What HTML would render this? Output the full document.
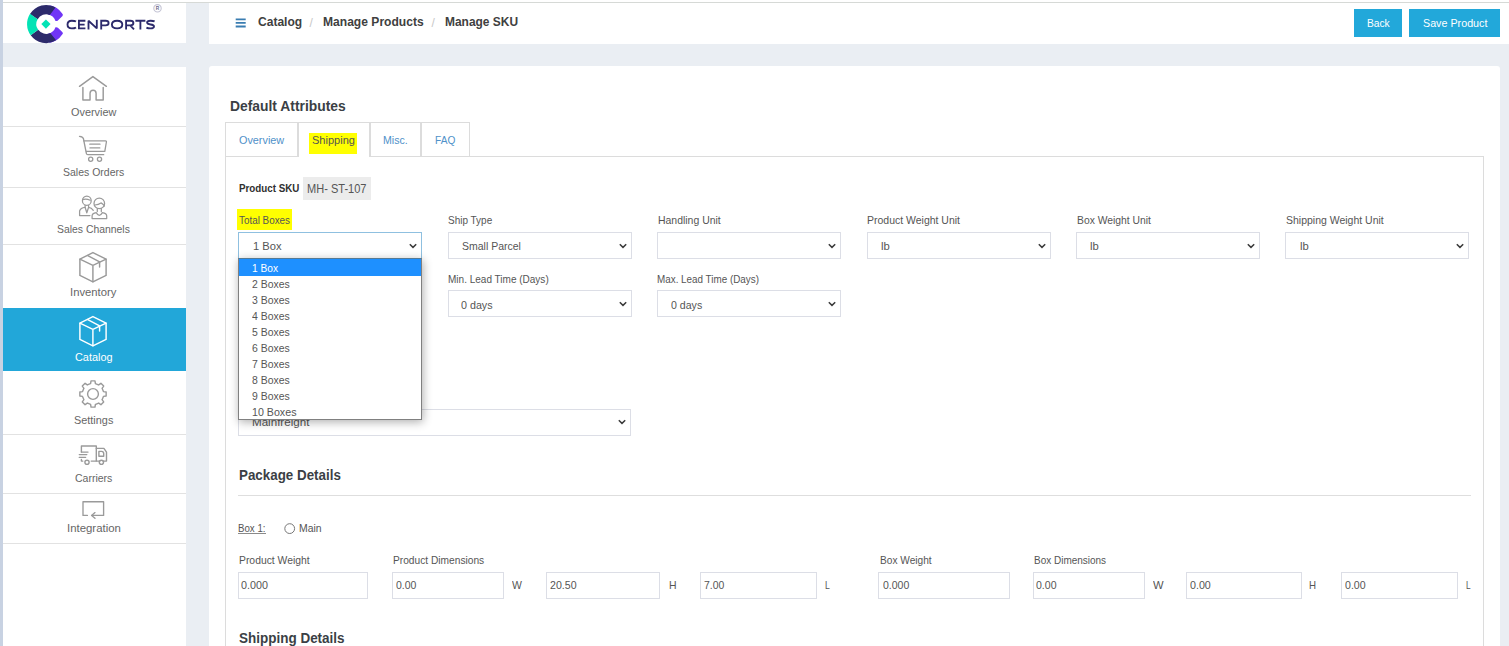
<!DOCTYPE html>
<html><head><meta charset="utf-8"><style>
html,body{margin:0;padding:0;}
body{width:1509px;height:646px;overflow:hidden;position:relative;background:#eaeef3;font-family:"Liberation Sans", sans-serif;}
</style></head><body>
<div style="position:absolute;left:0.00px;top:0.00px;width:3.00px;height:646.00px;background:#c8d2e2"></div>
<div style="position:absolute;left:3.00px;top:0.00px;width:1506.00px;height:2.00px;background:#fff"></div>
<div style="position:absolute;left:3.00px;top:2.00px;width:1506.00px;height:1.00px;background:#d6d9d6"></div>
<div style="position:absolute;left:3.00px;top:3.00px;width:182.50px;height:40.00px;background:#fff"></div>
<div style="position:absolute;left:209.00px;top:3.00px;width:1300.00px;height:41.00px;background:#fff"></div>
<div style="position:absolute;left:3.00px;top:67.00px;width:182.50px;height:580.00px;background:#fff"></div>
<div style="position:absolute;left:209.00px;top:66.00px;width:1291.00px;height:600.00px;background:#fff;border-radius:3px"></div>
<svg style="position:absolute;left:0;top:0" width="170" height="44" viewBox="0 0 170 44">
<path d="M49.45 5.32 A19.07 19.07 0 0 1 62.2 13.6 Q63.5 14.9 62.5 16.0 L57.9 20.4 Q57.0 21.2 55.5 20.9 A9.8 9.8 0 0 0 47.84 14.45 Z" fill="#7035f6"/><path d="M49.45 42.88 A19.07 19.07 0 0 0 62.2 34.6 Q63.5 33.3 62.5 32.2 L57.9 27.8 Q57.0 27.0 55.5 27.3 A9.8 9.8 0 0 1 47.84 33.75 Z" fill="#7035f6"/>
<path d="M29.97 13.99 A19.07 19.07 0 0 1 55.53 7.50 L49.81 15.01 A9.8 9.8 0 0 0 37.65 19.20 Z" fill="#2c2a6b"/><path d="M30.71 35.31 A19.07 19.07 0 0 0 56.10 40.36 L50.28 32.98 A9.8 9.8 0 0 1 38.21 29.86 Z" fill="#2c2a6b"/>
<path d="M30.06 13.85 A19.07 19.07 0 0 0 30.71 35.31 L38.21 29.86 A9.8 9.8 0 0 1 37.65 19.20 Z" fill="#02e3b5"/><path d="M45.94 19.50 L50.54 24.10 L45.94 28.70 L41.34 24.10 Z" fill="#02e3b5"/>
<path d="M76.0 21.6 C75.0 20.9 73.6 20.7 71.8 20.7 C69.0 20.7 67.5 22.3 67.5 24.549999999999997 C67.5 26.8 69.0 28.4 71.8 28.4 C73.6 28.4 75.0 28.1 76.0 27.4 M85.4 20.7 H78.9 V28.4 H85.4 M78.9 24.549999999999997 H84.6 M88.5 29.4 V20.7 L96.8 28.4 V19.7 M101.2 29.4 V20.7 H105.6 C107.6 20.7 108.6 21.8 108.6 23.0 C108.6 24.3 107.6 25.3 105.6 25.3 H101.2 M117.1 20.7 C120.6 20.7 122.3 22.3 122.3 24.549999999999997 C122.3 26.8 120.6 28.4 117.1 28.4 C113.6 28.4 111.9 26.8 111.9 24.549999999999997 C111.9 22.3 113.6 20.7 117.1 20.7 Z M126.1 29.4 V20.7 H130.4 C132.4 20.7 133.4 21.8 133.4 23.0 C133.4 24.3 132.4 25.3 130.4 25.3 H126.1 M130.2 25.3 L134.0 29.4 M135.4 20.7 H145.4 M140.4 20.7 V29.4 M154.6 21.4 C153.6 20.9 152.4 20.7 150.6 20.7 C148.2 20.7 147.1 21.5 147.1 22.6 C147.1 24.0 148.4 24.3 150.6 24.5 C153.0 24.7 154.0 25.1 154.0 26.5 C154.0 27.6 152.9 28.4 150.4 28.4 C148.8 28.4 147.2 28.0 146.4 27.6" fill="none" stroke="#2c2a6b" stroke-width="1.85" stroke-miterlimit="1.5"/>
<circle cx="157.5" cy="8.3" r="3.7" fill="#fff" stroke="#c4c4d4" stroke-width="1.1"/>
<text x="157.6" y="10.1" font-size="4.8" font-weight="700" text-anchor="middle" fill="#6a6a8a" font-family="Liberation Sans">R</text>
</svg>
<svg style="position:absolute;left:230px;top:14px" width="20" height="18"><path d="M5.7 5.3 H15.7 M5.7 8.9 H15.7 M5.7 12.5 H15.7" stroke="#3a7db1" stroke-width="1.8"/></svg>
<div style="position:absolute;left:257.60px;top:15.96px;font-size:12.8px;line-height:12.8px;font-weight:700;color:#404040;white-space:nowrap;transform:scaleX(0.9403);transform-origin:0 0;">Catalog</div>
<div style="position:absolute;left:309.50px;top:16.64px;font-size:12px;line-height:12px;font-weight:400;color:#c8c8c8;white-space:nowrap;">/</div>
<div style="position:absolute;left:323.00px;top:15.96px;font-size:12.8px;line-height:12.8px;font-weight:700;color:#404040;white-space:nowrap;transform:scaleX(0.9438);transform-origin:0 0;">Manage Products</div>
<div style="position:absolute;left:431.50px;top:16.64px;font-size:12px;line-height:12px;font-weight:400;color:#c8c8c8;white-space:nowrap;">/</div>
<div style="position:absolute;left:445.00px;top:15.96px;font-size:12.8px;line-height:12.8px;font-weight:700;color:#404040;white-space:nowrap;transform:scaleX(0.9335);transform-origin:0 0;">Manage SKU</div>
<div style="position:absolute;left:1354.00px;top:9.20px;width:48.00px;height:27.60px;background:#22a8da"></div>
<div style="position:absolute;left:1367.20px;top:17.71px;font-size:11.8px;line-height:11.8px;font-weight:400;color:#fff;white-space:nowrap;transform:scaleX(0.8669);transform-origin:0 0;">Back</div>
<div style="position:absolute;left:1409.30px;top:9.20px;width:90.70px;height:27.60px;background:#22a8da"></div>
<div style="position:absolute;left:1422.60px;top:17.71px;font-size:11.8px;line-height:11.8px;font-weight:400;color:#fff;white-space:nowrap;transform:scaleX(0.9096);transform-origin:0 0;">Save Product</div>
<div style="position:absolute;left:3.00px;top:126.00px;width:183.00px;height:1.00px;background:#e2e2e2"></div>
<div style="position:absolute;left:3.00px;top:186.50px;width:183.00px;height:1.00px;background:#e2e2e2"></div>
<div style="position:absolute;left:3.00px;top:243.50px;width:183.00px;height:1.00px;background:#e2e2e2"></div>
<div style="position:absolute;left:3.00px;top:434.00px;width:183.00px;height:1.00px;background:#e2e2e2"></div>
<div style="position:absolute;left:3.00px;top:492.50px;width:183.00px;height:1.00px;background:#e2e2e2"></div>
<div style="position:absolute;left:3.00px;top:543.00px;width:183.00px;height:1.00px;background:#e2e2e2"></div>
<div style="position:absolute;left:3.00px;top:307.50px;width:183.00px;height:63.50px;background:#22a7d9"></div>
<div style="position:absolute;left:70.80px;top:106.73px;font-size:11.3px;line-height:11.3px;font-weight:400;color:#666;white-space:nowrap;transform:scaleX(0.9639);transform-origin:0 0;">Overview</div>
<div style="position:absolute;left:62.90px;top:166.73px;font-size:11.3px;line-height:11.3px;font-weight:400;color:#666;white-space:nowrap;transform:scaleX(0.9287);transform-origin:0 0;">Sales Orders</div>
<div style="position:absolute;left:57.05px;top:223.73px;font-size:11.3px;line-height:11.3px;font-weight:400;color:#666;white-space:nowrap;transform:scaleX(0.9205);transform-origin:0 0;">Sales Channels</div>
<div style="position:absolute;left:70.30px;top:287.43px;font-size:11.3px;line-height:11.3px;font-weight:400;color:#666;white-space:nowrap;transform:scaleX(0.9978);transform-origin:0 0;">Inventory</div>
<div style="position:absolute;left:74.75px;top:352.23px;font-size:11.3px;line-height:11.3px;font-weight:400;color:#fff;white-space:nowrap;transform:scaleX(0.9640);transform-origin:0 0;">Catalog</div>
<div style="position:absolute;left:73.85px;top:415.03px;font-size:11.3px;line-height:11.3px;font-weight:400;color:#666;white-space:nowrap;transform:scaleX(0.9632);transform-origin:0 0;">Settings</div>
<div style="position:absolute;left:74.80px;top:473.43px;font-size:11.3px;line-height:11.3px;font-weight:400;color:#666;white-space:nowrap;transform:scaleX(0.9303);transform-origin:0 0;">Carriers</div>
<div style="position:absolute;left:66.55px;top:523.23px;font-size:11.3px;line-height:11.3px;font-weight:400;color:#666;white-space:nowrap;transform:scaleX(1.0094);transform-origin:0 0;">Integration</div>
<svg style="position:absolute;left:76px;top:73px" width="34" height="30" viewBox="0 0 34 30" fill="none" stroke="#9a9a9a" stroke-width="1.45" stroke-linejoin="round" stroke-linecap="round"><path d="M3.5 13.3 L16.9 3.6 L30.4 13.3"/><path d="M6.9 14.4 V27 H14.05 V20.2 A3.03 3.03 0 0 1 20.1 20.2 V27 H27.2 V14.4"/></svg>
<svg style="position:absolute;left:76px;top:132px" width="34" height="32" viewBox="0 0 34 32" fill="none" stroke="#9a9a9a" stroke-width="1.3" stroke-linejoin="round" stroke-linecap="round"><path d="M3.5 4.3 C5.5 4.5 7.3 5.5 7.5 7 L10.4 21.5 Q10.6 22.7 11.8 22.7 H27.7"/><path d="M7.7 8.8 H29.4 Q30.6 8.9 30.4 10 L28.8 19.3 H10.4"/><path d="M13.8 12.2 H24 M14 15.9 H23.8"/><circle cx="14.7" cy="27.2" r="2.1"/><circle cx="23.5" cy="27.2" r="2.1"/></svg>
<svg style="position:absolute;left:76px;top:193px" width="34" height="28" viewBox="0 0 34 28" fill="none" stroke="#9a9a9a" stroke-width="1.25" stroke-linejoin="round" stroke-linecap="round"><ellipse cx="10.8" cy="7.65" rx="4.4" ry="4.6"/><path d="M6.6 6.6 Q10 5.2 14.2 7.2"/><path d="M9.1 12.3 V14.3 Q4.5 14.8 3.6 18.0 V22.5 H13.9"/><path d="M9.1 14.3 L10.8 19.8 L12.6 14.3 V12.3 M12.6 14.3 Q15.5 14.6 17.3 17.3"/><circle cx="23.3" cy="10.4" r="5.3"/><path d="M19.0 12.0 Q22.5 11.6 25 9.9 Q27.2 11 28.4 13"/><path d="M21.3 15.6 V18.6 M25.3 15.6 V18.6"/><path d="M16.1 25.5 V22.8 Q16.1 20.3 20.2 19.6 Q23.3 25 26.4 19.6 Q30.7 20.3 30.7 22.8 V25.5 Z"/></svg>
<svg style="position:absolute;left:76px;top:250px" width="34" height="34" viewBox="0 0 34 34" fill="none" stroke="#9a9a9a" stroke-width="1.45" stroke-linejoin="round" stroke-linecap="round"><path d="M16.9 2.6 L30.1 9.2 V25.4 L16.9 31.8 L3.9 25.4 V9.2 Z"/><path d="M3.9 9.2 L16.9 15.4 L30.1 9.2 M16.9 15.4 V31.8"/><path d="M11.8 5.6 L23.6 11.8 V17.1"/></svg>
<svg style="position:absolute;left:76px;top:313.8px" width="34" height="34" viewBox="0 0 34 34" fill="none" stroke="#fff" stroke-width="1.45" stroke-linejoin="round" stroke-linecap="round"><path d="M16.9 2.6 L30.1 9.2 V25.4 L16.9 31.8 L3.9 25.4 V9.2 Z"/><path d="M3.9 9.2 L16.9 15.4 L30.1 9.2 M16.9 15.4 V31.8"/><path d="M11.8 5.6 L23.6 11.8 V17.1"/></svg>
<svg style="position:absolute;left:76px;top:377px" width="34" height="34" viewBox="0 0 34 34" fill="none" stroke="#9a9a9a" stroke-width="1.4" stroke-linejoin="round" stroke-linecap="round"><path d="M14.32 6.64 L14.59 6.57 L15.03 3.85 L18.97 3.85 L19.41 6.57 L22.43 7.78 L22.67 7.93 L24.91 6.31 L27.69 9.09 L26.07 11.33 L27.36 14.32 L27.43 14.59 L30.15 15.03 L30.15 18.97 L27.43 19.41 L26.22 22.43 L26.07 22.67 L27.69 24.91 L24.91 27.69 L22.67 26.07 L19.68 27.36 L19.41 27.43 L18.97 30.15 L15.03 30.15 L14.59 27.43 L11.57 26.22 L11.33 26.07 L9.09 27.69 L6.31 24.91 L7.93 22.67 L6.64 19.68 L6.57 19.41 L3.85 18.97 L3.85 15.03 L6.57 14.59 L7.78 11.57 L7.93 11.33 L6.31 9.09 L9.09 6.31 L11.33 7.93 Z"/><circle cx="17" cy="17" r="5.4"/></svg>
<svg style="position:absolute;left:76px;top:442px" width="34" height="26" viewBox="0 0 34 26" fill="none" stroke="#9a9a9a" stroke-width="1.4" stroke-linejoin="round" stroke-linecap="round"><path d="M5.4 10.1 V4 H20.3 V19.1"/><path d="M5.4 10.1 H12"/><path d="M3.3 12.6 H10.8 M3.3 15.4 H9.6"/><path d="M5.4 17.5 V19.1 H6.8"/><path d="M15.2 19.1 H23.8 M27.1 19.1 H30.5 V10.1 L27.9 6.4 H20.3"/><path d="M22.9 9.4 H25.6 Q27.7 9.4 27.7 11.6 V14.3 H22.9 Z"/><circle cx="11" cy="20.3" r="2.1"/><circle cx="25.4" cy="20.3" r="2.1"/></svg>
<svg style="position:absolute;left:76px;top:494px" width="34" height="28" viewBox="0 0 34 28" fill="none" stroke="#9a9a9a" stroke-width="1.35" stroke-linejoin="round" stroke-linecap="round"><path d="M11.4 21.4 H7 V7.7 H27.6 V21.4 H15.6"/><path d="M19 18.6 L15.6 21.4 L19 24.2"/></svg>
<div style="position:absolute;left:230.00px;top:98.30px;font-size:15px;line-height:15px;font-weight:700;color:#3b3f45;white-space:nowrap;transform:scaleX(0.9242);transform-origin:0 0;">Default Attributes</div>
<div style="position:absolute;left:225.00px;top:122.00px;width:73.00px;height:35.00px;box-sizing:border-box;border:1px solid #dcdcdc;border-bottom:none"></div>
<div style="position:absolute;left:298.00px;top:122.00px;width:72.00px;height:35.00px;box-sizing:border-box;border:1px solid #dcdcdc;border-bottom:none"></div>
<div style="position:absolute;left:370.00px;top:122.00px;width:51.00px;height:35.00px;box-sizing:border-box;border:1px solid #dcdcdc;border-bottom:none"></div>
<div style="position:absolute;left:421.00px;top:122.00px;width:49.00px;height:35.00px;box-sizing:border-box;border:1px solid #dcdcdc;border-bottom:none"></div>
<div style="position:absolute;left:225.00px;top:156.00px;width:73.00px;height:1.00px;background:#dcdcdc"></div>
<div style="position:absolute;left:370.00px;top:156.00px;width:1114.00px;height:1.00px;background:#dcdcdc"></div>
<div style="position:absolute;left:225.00px;top:156.00px;width:1.00px;height:500.00px;background:#dcdcdc"></div>
<div style="position:absolute;left:1483.00px;top:156.00px;width:1.00px;height:500.00px;background:#dcdcdc"></div>
<div style="position:absolute;left:239.40px;top:134.77px;font-size:11.5px;line-height:11.5px;font-weight:400;color:#4f91c9;white-space:nowrap;transform:scaleX(0.9417);transform-origin:0 0;">Overview</div>
<div style="position:absolute;left:309.00px;top:132.50px;width:48.00px;height:21.30px;background:#ffff00"></div>
<div style="position:absolute;left:312.00px;top:134.77px;font-size:11.5px;line-height:11.5px;font-weight:400;color:#555;white-space:nowrap;transform:scaleX(0.9598);transform-origin:0 0;">Shipping</div>
<div style="position:absolute;left:383.30px;top:134.77px;font-size:11.5px;line-height:11.5px;font-weight:400;color:#4f91c9;white-space:nowrap;transform:scaleX(0.9216);transform-origin:0 0;">Misc.</div>
<div style="position:absolute;left:435.40px;top:134.77px;font-size:11.5px;line-height:11.5px;font-weight:400;color:#4f91c9;white-space:nowrap;transform:scaleX(0.8826);transform-origin:0 0;">FAQ</div>
<div style="position:absolute;left:238.60px;top:183.39px;font-size:11px;line-height:11px;font-weight:700;color:#2f2f2f;white-space:nowrap;transform:scaleX(0.8909);transform-origin:0 0;">Product SKU</div>
<div style="position:absolute;left:303.00px;top:176.50px;width:68.00px;height:23.00px;background:#ececec"></div>
<div style="position:absolute;left:307.00px;top:182.74px;font-size:12px;line-height:12px;font-weight:400;color:#555;white-space:nowrap;transform:scaleX(0.9196);transform-origin:0 0;">MH- ST-107</div>
<div style="position:absolute;left:237.00px;top:209.20px;width:55.00px;height:20.60px;background:#ffff00"></div>
<div style="position:absolute;left:239.00px;top:214.61px;font-size:10.5px;line-height:10.5px;font-weight:400;color:#555;white-space:nowrap;transform:scaleX(0.9392);transform-origin:0 0;">Total Boxes</div>
<div style="position:absolute;left:238.00px;top:232.00px;width:183.50px;height:27.00px;box-sizing:border-box;border:1px solid #8fc0e0;background:#fff"></div>
<svg style="position:absolute;left:408.00px;top:241.90px" width="10" height="8" viewBox="0 0 10 8"><path d="M1.8 2.2 L5 5.4 L8.2 2.2" fill="none" stroke="#3a3a3a" stroke-width="1.5"/></svg>
<div style="position:absolute;left:447.70px;top:214.61px;font-size:10.5px;line-height:10.5px;font-weight:400;color:#555;white-space:nowrap;transform:scaleX(0.9505);transform-origin:0 0;">Ship Type</div>
<div style="position:absolute;left:448.00px;top:232.00px;width:183.50px;height:27.00px;box-sizing:border-box;border:1px solid #dcdee6;background:#fff"></div>
<svg style="position:absolute;left:618.00px;top:241.90px" width="10" height="8" viewBox="0 0 10 8"><path d="M1.8 2.2 L5 5.4 L8.2 2.2" fill="none" stroke="#3a3a3a" stroke-width="1.5"/></svg>
<div style="position:absolute;left:657.70px;top:214.61px;font-size:10.5px;line-height:10.5px;font-weight:400;color:#555;white-space:nowrap;transform:scaleX(0.9952);transform-origin:0 0;">Handling Unit</div>
<div style="position:absolute;left:657.00px;top:232.00px;width:183.50px;height:27.00px;box-sizing:border-box;border:1px solid #dcdee6;background:#fff"></div>
<svg style="position:absolute;left:827.00px;top:241.90px" width="10" height="8" viewBox="0 0 10 8"><path d="M1.8 2.2 L5 5.4 L8.2 2.2" fill="none" stroke="#3a3a3a" stroke-width="1.5"/></svg>
<div style="position:absolute;left:867.10px;top:214.61px;font-size:10.5px;line-height:10.5px;font-weight:400;color:#555;white-space:nowrap;transform:scaleX(0.9979);transform-origin:0 0;">Product Weight Unit</div>
<div style="position:absolute;left:867.00px;top:232.00px;width:183.50px;height:27.00px;box-sizing:border-box;border:1px solid #dcdee6;background:#fff"></div>
<svg style="position:absolute;left:1037.00px;top:241.90px" width="10" height="8" viewBox="0 0 10 8"><path d="M1.8 2.2 L5 5.4 L8.2 2.2" fill="none" stroke="#3a3a3a" stroke-width="1.5"/></svg>
<div style="position:absolute;left:1076.60px;top:214.61px;font-size:10.5px;line-height:10.5px;font-weight:400;color:#555;white-space:nowrap;transform:scaleX(0.9840);transform-origin:0 0;">Box Weight Unit</div>
<div style="position:absolute;left:1076.00px;top:232.00px;width:183.50px;height:27.00px;box-sizing:border-box;border:1px solid #dcdee6;background:#fff"></div>
<svg style="position:absolute;left:1246.00px;top:241.90px" width="10" height="8" viewBox="0 0 10 8"><path d="M1.8 2.2 L5 5.4 L8.2 2.2" fill="none" stroke="#3a3a3a" stroke-width="1.5"/></svg>
<div style="position:absolute;left:1286.00px;top:214.61px;font-size:10.5px;line-height:10.5px;font-weight:400;color:#555;white-space:nowrap;transform:scaleX(0.9990);transform-origin:0 0;">Shipping Weight Unit</div>
<div style="position:absolute;left:1285.00px;top:232.00px;width:183.50px;height:27.00px;box-sizing:border-box;border:1px solid #dcdee6;background:#fff"></div>
<svg style="position:absolute;left:1455.00px;top:241.90px" width="10" height="8" viewBox="0 0 10 8"><path d="M1.8 2.2 L5 5.4 L8.2 2.2" fill="none" stroke="#3a3a3a" stroke-width="1.5"/></svg>
<div style="position:absolute;left:252.90px;top:241.37px;font-size:11.5px;line-height:11.5px;font-weight:400;color:#555;white-space:nowrap;transform:scaleX(0.9694);transform-origin:0 0;">1 Box</div>
<div style="position:absolute;left:461.60px;top:241.37px;font-size:11.5px;line-height:11.5px;font-weight:400;color:#555;white-space:nowrap;transform:scaleX(0.9132);transform-origin:0 0;">Small Parcel</div>
<div style="position:absolute;left:880.70px;top:241.37px;font-size:11.5px;line-height:11.5px;font-weight:400;color:#555;white-space:nowrap;transform:scaleX(0.9778);transform-origin:0 0;">lb</div>
<div style="position:absolute;left:1090.10px;top:241.37px;font-size:11.5px;line-height:11.5px;font-weight:400;color:#555;white-space:nowrap;transform:scaleX(0.9778);transform-origin:0 0;">lb</div>
<div style="position:absolute;left:1299.60px;top:241.37px;font-size:11.5px;line-height:11.5px;font-weight:400;color:#555;white-space:nowrap;transform:scaleX(0.9778);transform-origin:0 0;">lb</div>
<div style="position:absolute;left:447.70px;top:273.81px;font-size:10.5px;line-height:10.5px;font-weight:400;color:#555;white-space:nowrap;transform:scaleX(0.9536);transform-origin:0 0;">Min. Lead Time (Days)</div>
<div style="position:absolute;left:657.40px;top:273.81px;font-size:10.5px;line-height:10.5px;font-weight:400;color:#555;white-space:nowrap;transform:scaleX(0.9392);transform-origin:0 0;">Max. Lead Time (Days)</div>
<div style="position:absolute;left:448.00px;top:290.00px;width:183.50px;height:27.00px;box-sizing:border-box;border:1px solid #dcdee6;background:#fff"></div>
<svg style="position:absolute;left:618.00px;top:299.90px" width="10" height="8" viewBox="0 0 10 8"><path d="M1.8 2.2 L5 5.4 L8.2 2.2" fill="none" stroke="#3a3a3a" stroke-width="1.5"/></svg>
<div style="position:absolute;left:657.00px;top:290.00px;width:183.50px;height:27.00px;box-sizing:border-box;border:1px solid #dcdee6;background:#fff"></div>
<svg style="position:absolute;left:827.00px;top:299.90px" width="10" height="8" viewBox="0 0 10 8"><path d="M1.8 2.2 L5 5.4 L8.2 2.2" fill="none" stroke="#3a3a3a" stroke-width="1.5"/></svg>
<div style="position:absolute;left:461.20px;top:299.67px;font-size:11.5px;line-height:11.5px;font-weight:400;color:#555;white-space:nowrap;transform:scaleX(0.9322);transform-origin:0 0;">0 days</div>
<div style="position:absolute;left:670.80px;top:299.67px;font-size:11.5px;line-height:11.5px;font-weight:400;color:#555;white-space:nowrap;transform:scaleX(0.9204);transform-origin:0 0;">0 days</div>
<div style="position:absolute;left:238.40px;top:408.50px;width:392.30px;height:27.00px;box-sizing:border-box;border:1px solid #dcdee6;background:#fff"></div>
<svg style="position:absolute;left:617.20px;top:418.40px" width="10" height="8" viewBox="0 0 10 8"><path d="M1.8 2.2 L5 5.4 L8.2 2.2" fill="none" stroke="#3a3a3a" stroke-width="1.5"/></svg>
<div style="position:absolute;left:251.90px;top:416.97px;font-size:11.5px;line-height:11.5px;font-weight:400;color:#555;white-space:nowrap;transform:scaleX(1.0088);transform-origin:0 0;">Mainfreight</div>
<div style="position:absolute;left:238px;top:258px;width:184px;height:162px;box-sizing:border-box;border:1px solid #808080;border-top-color:#557a94;background:#fff;box-shadow:1px 2px 9px rgba(0,0,0,0.32)">
<div style="position:absolute;left:0;top:0;width:182px;height:16.5px;background:#1e90ff"></div>
</div>
<div style="position:absolute;left:251.90px;top:263.49px;font-size:11px;line-height:11px;font-weight:400;color:#fff;white-space:nowrap;transform:scaleX(0.9253);transform-origin:0 0;">1 Box</div>
<div style="position:absolute;left:251.90px;top:279.49px;font-size:11px;line-height:11px;font-weight:400;color:#555;white-space:nowrap;transform:scaleX(0.9496);transform-origin:0 0;">2 Boxes</div>
<div style="position:absolute;left:251.90px;top:295.49px;font-size:11px;line-height:11px;font-weight:400;color:#555;white-space:nowrap;transform:scaleX(0.9496);transform-origin:0 0;">3 Boxes</div>
<div style="position:absolute;left:251.90px;top:311.49px;font-size:11px;line-height:11px;font-weight:400;color:#555;white-space:nowrap;transform:scaleX(0.9496);transform-origin:0 0;">4 Boxes</div>
<div style="position:absolute;left:251.90px;top:327.49px;font-size:11px;line-height:11px;font-weight:400;color:#555;white-space:nowrap;transform:scaleX(0.9496);transform-origin:0 0;">5 Boxes</div>
<div style="position:absolute;left:251.90px;top:343.49px;font-size:11px;line-height:11px;font-weight:400;color:#555;white-space:nowrap;transform:scaleX(0.9496);transform-origin:0 0;">6 Boxes</div>
<div style="position:absolute;left:251.90px;top:359.49px;font-size:11px;line-height:11px;font-weight:400;color:#555;white-space:nowrap;transform:scaleX(0.9496);transform-origin:0 0;">7 Boxes</div>
<div style="position:absolute;left:251.90px;top:375.49px;font-size:11px;line-height:11px;font-weight:400;color:#555;white-space:nowrap;transform:scaleX(0.9496);transform-origin:0 0;">8 Boxes</div>
<div style="position:absolute;left:251.90px;top:391.49px;font-size:11px;line-height:11px;font-weight:400;color:#555;white-space:nowrap;transform:scaleX(0.9496);transform-origin:0 0;">9 Boxes</div>
<div style="position:absolute;left:251.90px;top:407.49px;font-size:11px;line-height:11px;font-weight:400;color:#555;white-space:nowrap;transform:scaleX(0.9695);transform-origin:0 0;">10 Boxes</div>
<div style="position:absolute;left:238.50px;top:468.23px;font-size:14.5px;line-height:14.5px;font-weight:700;color:#3b3f45;white-space:nowrap;transform:scaleX(0.9221);transform-origin:0 0;">Package Details</div>
<div style="position:absolute;left:238.00px;top:494.50px;width:1233.00px;height:1.00px;background:#dedede"></div>
<div style="position:absolute;left:238.20px;top:522.71px;font-size:10.5px;line-height:10.5px;font-weight:400;color:#555;white-space:nowrap;transform:scaleX(0.9228);transform-origin:0 0;">Box 1:</div>
<div style="position:absolute;left:238.00px;top:532.60px;width:28.00px;height:1.00px;background:#8a8a8a"></div>
<svg style="position:absolute;left:283px;top:522px" width="13" height="13"><circle cx="6.7" cy="6.6" r="4.9" fill="#fff" stroke="#777" stroke-width="1"/></svg>
<div style="position:absolute;left:298.50px;top:522.71px;font-size:10.5px;line-height:10.5px;font-weight:400;color:#555;white-space:nowrap;transform:scaleX(0.9912);transform-origin:0 0;">Main</div>
<div style="position:absolute;left:238.70px;top:554.81px;font-size:10.5px;line-height:10.5px;font-weight:400;color:#555;white-space:nowrap;transform:scaleX(0.9874);transform-origin:0 0;">Product Weight</div>
<div style="position:absolute;left:392.50px;top:554.81px;font-size:10.5px;line-height:10.5px;font-weight:400;color:#555;white-space:nowrap;transform:scaleX(0.9702);transform-origin:0 0;">Product Dimensions</div>
<div style="position:absolute;left:879.60px;top:554.81px;font-size:10.5px;line-height:10.5px;font-weight:400;color:#555;white-space:nowrap;transform:scaleX(0.9645);transform-origin:0 0;">Box Weight</div>
<div style="position:absolute;left:1033.80px;top:554.81px;font-size:10.5px;line-height:10.5px;font-weight:400;color:#555;white-space:nowrap;transform:scaleX(0.9499);transform-origin:0 0;">Box Dimensions</div>
<div style="position:absolute;left:238.00px;top:572.00px;width:130.00px;height:27.00px;box-sizing:border-box;border:1px solid #dcdee6;background:#fff"></div>
<div style="position:absolute;left:392.00px;top:572.00px;width:112.00px;height:27.00px;box-sizing:border-box;border:1px solid #dcdee6;background:#fff"></div>
<div style="position:absolute;left:546.00px;top:572.00px;width:114.00px;height:27.00px;box-sizing:border-box;border:1px solid #dcdee6;background:#fff"></div>
<div style="position:absolute;left:700.00px;top:572.00px;width:117.00px;height:27.00px;box-sizing:border-box;border:1px solid #dcdee6;background:#fff"></div>
<div style="position:absolute;left:878.00px;top:572.00px;width:132.00px;height:27.00px;box-sizing:border-box;border:1px solid #dcdee6;background:#fff"></div>
<div style="position:absolute;left:1033.00px;top:572.00px;width:112.00px;height:27.00px;box-sizing:border-box;border:1px solid #dcdee6;background:#fff"></div>
<div style="position:absolute;left:1186.00px;top:572.00px;width:116.00px;height:27.00px;box-sizing:border-box;border:1px solid #dcdee6;background:#fff"></div>
<div style="position:absolute;left:1341.00px;top:572.00px;width:117.00px;height:27.00px;box-sizing:border-box;border:1px solid #dcdee6;background:#fff"></div>
<div style="position:absolute;left:241.40px;top:579.59px;font-size:11px;line-height:11px;font-weight:400;color:#555;white-space:nowrap;transform:scaleX(0.9782);transform-origin:0 0;">0.000</div>
<div style="position:absolute;left:395.50px;top:579.59px;font-size:11px;line-height:11px;font-weight:400;color:#555;white-space:nowrap;transform:scaleX(0.9533);transform-origin:0 0;">0.00</div>
<div style="position:absolute;left:549.60px;top:579.59px;font-size:11px;line-height:11px;font-weight:400;color:#555;white-space:nowrap;transform:scaleX(0.9636);transform-origin:0 0;">20.50</div>
<div style="position:absolute;left:703.70px;top:579.59px;font-size:11px;line-height:11px;font-weight:400;color:#555;white-space:nowrap;transform:scaleX(0.9486);transform-origin:0 0;">7.00</div>
<div style="position:absolute;left:882.60px;top:579.59px;font-size:11px;line-height:11px;font-weight:400;color:#555;white-space:nowrap;transform:scaleX(0.9564);transform-origin:0 0;">0.000</div>
<div style="position:absolute;left:1036.40px;top:579.59px;font-size:11px;line-height:11px;font-weight:400;color:#555;white-space:nowrap;transform:scaleX(0.9579);transform-origin:0 0;">0.00</div>
<div style="position:absolute;left:1190.30px;top:579.59px;font-size:11px;line-height:11px;font-weight:400;color:#555;white-space:nowrap;transform:scaleX(0.9720);transform-origin:0 0;">0.00</div>
<div style="position:absolute;left:1344.50px;top:579.59px;font-size:11px;line-height:11px;font-weight:400;color:#555;white-space:nowrap;transform:scaleX(0.9626);transform-origin:0 0;">0.00</div>
<div style="position:absolute;left:512.10px;top:579.59px;font-size:11px;line-height:11px;font-weight:400;color:#555;white-space:nowrap;transform:scaleX(0.9519);transform-origin:0 0;">W</div>
<div style="position:absolute;left:668.50px;top:579.59px;font-size:11px;line-height:11px;font-weight:400;color:#555;white-space:nowrap;transform:scaleX(0.9494);transform-origin:0 0;">H</div>
<div style="position:absolute;left:825.00px;top:579.59px;font-size:11px;line-height:11px;font-weight:400;color:#555;white-space:nowrap;transform:scaleX(0.7869);transform-origin:0 0;">L</div>
<div style="position:absolute;left:1152.60px;top:579.59px;font-size:11px;line-height:11px;font-weight:400;color:#555;white-space:nowrap;transform:scaleX(1.0192);transform-origin:0 0;">W</div>
<div style="position:absolute;left:1309.30px;top:579.59px;font-size:11px;line-height:11px;font-weight:400;color:#555;white-space:nowrap;transform:scaleX(0.8861);transform-origin:0 0;">H</div>
<div style="position:absolute;left:1466.00px;top:579.59px;font-size:11px;line-height:11px;font-weight:400;color:#555;white-space:nowrap;transform:scaleX(0.7541);transform-origin:0 0;">L</div>
<div style="position:absolute;left:238.70px;top:630.83px;font-size:14.5px;line-height:14.5px;font-weight:700;color:#3b3f45;white-space:nowrap;transform:scaleX(0.9296);transform-origin:0 0;">Shipping Details</div>
</body></html>
